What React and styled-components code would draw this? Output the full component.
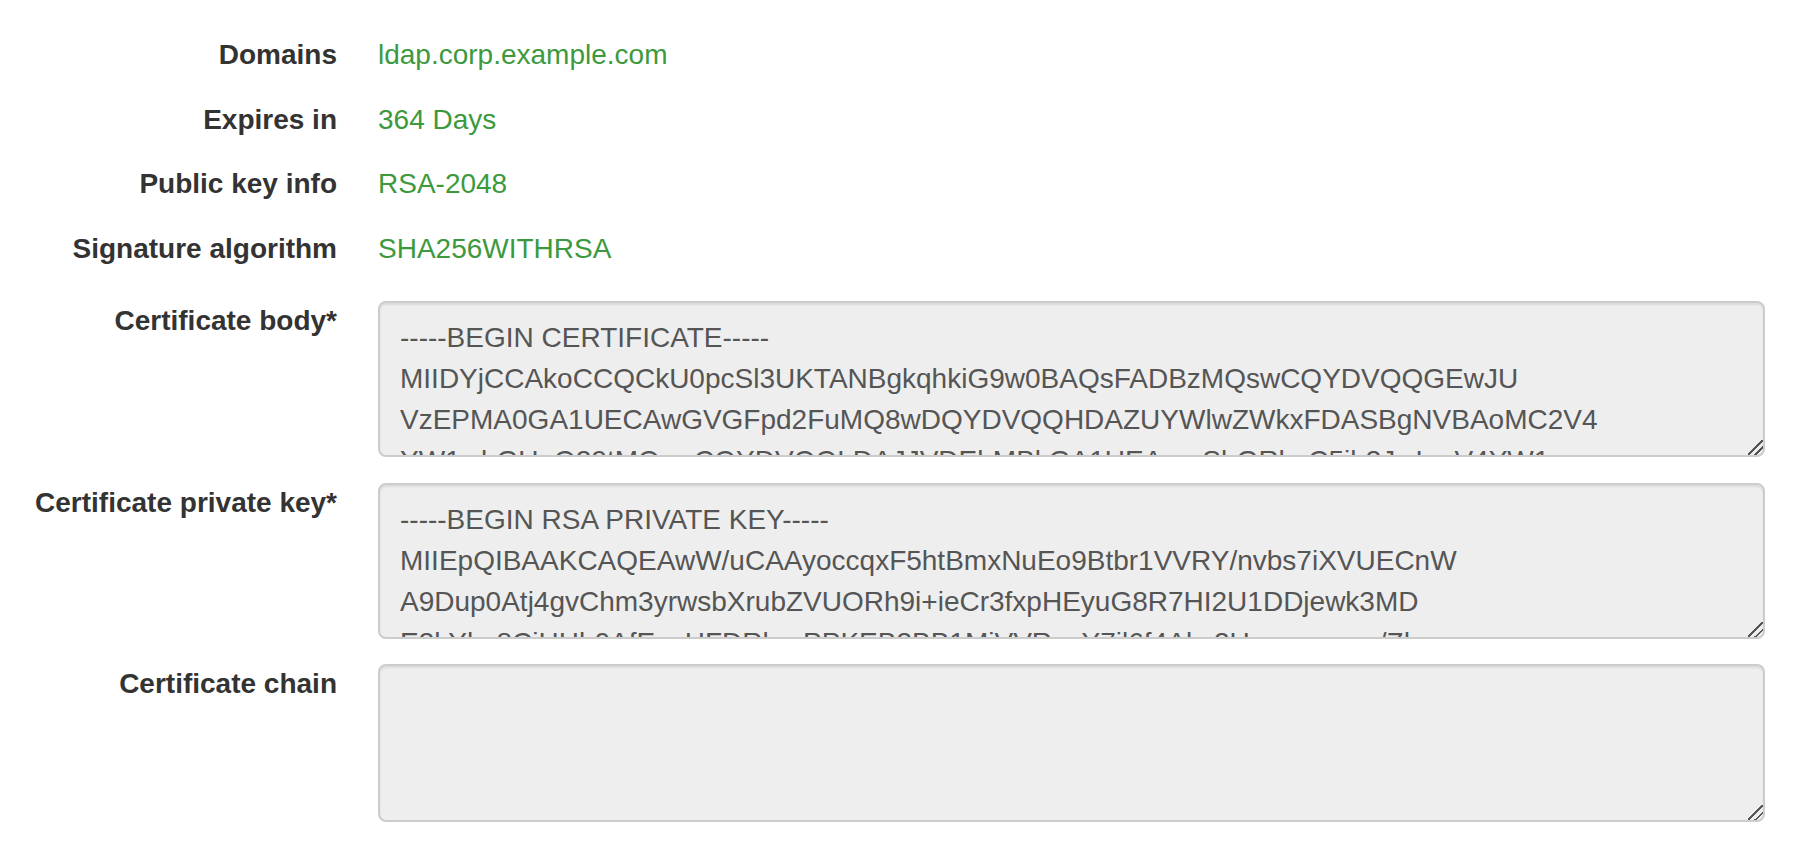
import React from 'react';
import styled, { createGlobalStyle } from 'styled-components';

const GlobalStyle = createGlobalStyle`
  html, body {
    margin: 0;
    padding: 0;
    background: #fff;
  }
  body {
    font-family: "Liberation Sans", Arial, sans-serif;
  }
`;

const Form = styled.form`
  display: flex;
  flex-direction: column;
  padding: 35px 39px 0 0;
`;

const Row = styled.div`
  display: grid;
  grid-template-columns: 337px 1fr;
  column-gap: 41px;
  align-items: start;
  margin-bottom: ${(p) => p.$after || 0}px;
`;

const Label = styled.label`
  font-size: 28px;
  line-height: 40px;
  font-weight: 700;
  color: #333;
  text-align: right;
  white-space: nowrap;
`;

const Value = styled.div`
  font-size: 28px;
  line-height: 40px;
  color: #3d993d;
  white-space: nowrap;
`;

const Area = styled.textarea`
  box-sizing: border-box;
  display: block;
  width: 100%;
  height: ${(p) => p.$h}px;
  margin: 0;
  padding: 14px 20px;
  font-family: "Liberation Sans", Arial, sans-serif;
  font-size: 28px;
  line-height: 41px;
  color: #555;
  background: #eee;
  border: 2px solid #ccc;
  border-radius: 8px;
  box-shadow: inset 0 2px 2px rgba(0, 0, 0, 0.075);
  overflow: hidden;
  white-space: pre;
  resize: both;
  outline: none;

  &::-webkit-resizer {
    background: linear-gradient(
      135deg,
      transparent 0 46%,
      #555 46% 54%,
      transparent 54% 70%,
      #555 70% 78%,
      transparent 78%
    );
  }
`;

const facts = [
  { label: 'Domains', value: 'ldap.corp.example.com' },
  { label: 'Expires in', value: '364 Days' },
  { label: 'Public key info', value: 'RSA-2048' },
  { label: 'Signature algorithm', value: 'SHA256WITHRSA' },
];

const certBody = [
  '-----BEGIN CERTIFICATE-----',
  'MIIDYjCCAkoCCQCkU0pcSl3UKTANBgkqhkiG9w0BAQsFADBzMQswCQYDVQQGEwJU',
  'VzEPMA0GA1UECAwGVGFpd2FuMQ8wDQYDVQQHDAZUYWlwZWkxFDASBgNVBAoMC2V4',
  'YW1wbGUgQ29tMQswCQYDVQQLDAJJVDEbMBkGA1UEAwwSbGRhcC5jb3JwLmV4YW1w',
  'bGUuY29tMB4XDTE4MDEwMjAzMDQwNVoXDTE5MDEwMjAzMDQwNVowczELMAkGA1UE',
  '-----END CERTIFICATE-----',
].join('\n');

const privateKey = [
  '-----BEGIN RSA PRIVATE KEY-----',
  'MIIEpQIBAAKCAQEAwW/uCAAyoccqxF5htBmxNuEo9Btbr1VVRY/nvbs7iXVUECnW',
  'A9Dup0Atj4gvChm3yrwsbXrubZVUORh9i+ieCr3fxpHEyuG8R7HI2U1DDjewk3MD',
  'E3kYhc8CjHHb0AfEexHFDRbrePPKEB3BB1MiVVRqcY7jl6f4Akc2Ucwemwew/Zh',
  'qK7bQmLr0sT2uF5xWYzA8cD1eG4hJ6kL9mN3oP5qR7sT9uV1wX3yZ5aB7cD9eF1g',
  '-----END RSA PRIVATE KEY-----',
].join('\n');

export default function App() {
  return (
    <>
      <GlobalStyle />
      <Form onSubmit={(e) => e.preventDefault()}>
        {facts.map((f, i) => (
          <Row key={f.label} $after={i === facts.length - 1 ? 32.5 : 24.5}>
            <Label>{f.label}</Label>
            <Value>{f.value}</Value>
          </Row>
        ))}
        <Row $after={26}>
          <Label>Certificate body*</Label>
          <Area $h={156} readOnly value={certBody} />
        </Row>
        <Row $after={25}>
          <Label>Certificate private key*</Label>
          <Area $h={156} readOnly value={privateKey} />
        </Row>
        <Row>
          <Label>Certificate chain</Label>
          <Area $h={158} readOnly value="" />
        </Row>
      </Form>
    </>
  );
}
